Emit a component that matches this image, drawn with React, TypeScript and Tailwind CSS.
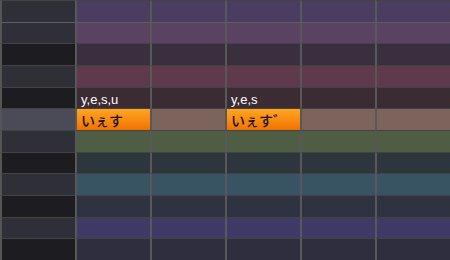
const rows = [
  { side: 'bg-[#2e2f37]', lane: 'bg-[#4a3d60]' },
  { side: 'bg-[#2e2f37]', lane: 'bg-[#5a4262]' },
  { side: 'bg-[#1c1c21]', lane: 'bg-[#3a2f3e]' },
  { side: 'bg-[#2e2f37]', lane: 'bg-[#5e3a4c]' },
  { side: 'bg-[#1c1c21]', lane: 'bg-[#3b2c33]' },
  { side: 'bg-[#4a4b56]', lane: 'bg-[#7c645d]' },
  { side: 'bg-[#2e2f37]', lane: 'bg-[#4e5d44]' },
  { side: 'bg-[#1c1c21]', lane: 'bg-[#2e363d]' },
  { side: 'bg-[#2e2f37]', lane: 'bg-[#385462]' },
  { side: 'bg-[#1c1c21]', lane: 'bg-[#2e3241]' },
  { side: 'bg-[#2e2f37]', lane: 'bg-[#3e3a65]' },
  { side: 'bg-[#1c1c21]', lane: 'bg-[#2f2e3f]' },
];

// lyrics row (4) and notes row (5)
const lyrics: Record<number, string> = { 0: 'y,e,s,u', 2: 'y,e,s' };
const notes: Record<number, string> = { 0: 'いぇす', 2: 'いぇす゛' };

export default function App() {
  return (
    <div className="grid h-[260px] w-[450px] grid-cols-6 grid-rows-[repeat(12,minmax(0,1fr))] overflow-hidden bg-[#1c1c21] font-['Liberation_Sans',Arial,sans-serif]">
      {rows.map((row, r) => {
        const top = r === 1 ? 'border-t-[#5e5e5e]' : 'border-t-[#434343]';
        return [
          <div key={`s${r}`} className={`border-t border-l-2 border-l-[#545454] ${top} ${row.side}`} />,
          ...[0, 1, 2, 3, 4].map((c) => {
            if (r === 4 && lyrics[c]) {
              return (
                <div key={`${r}-${c}`} className={`flex items-end border-t border-l-2 border-l-[#585858] ${top} ${row.lane} pb-[2.5px] pl-1 text-[13px] leading-none text-white`}>
                  {lyrics[c]}
                </div>
              );
            }
            if (r === 5 && notes[c]) {
              return (
                <div key={`${r}-${c}`} className={`flex items-center overflow-hidden whitespace-nowrap border-t border-l-2 border-l-[#585858] ${top} bg-linear-to-b from-[#ffa620] to-[#f07200] pl-1 font-['Noto_Sans_CJK_JP',sans-serif] text-[14px] font-medium leading-none text-[#1a1208]`}>
                  {notes[c]}
                </div>
              );
            }
            return <div key={`${r}-${c}`} className={`border-t border-l-2 border-l-[#585858] ${top} ${row.lane}`} />;
          }),
        ];
      })}
    </div>
  );
}
